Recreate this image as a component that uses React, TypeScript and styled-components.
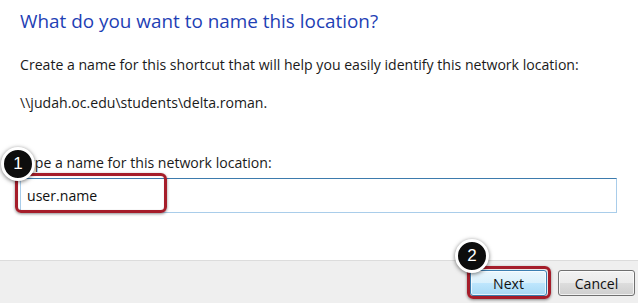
import React from "react";
import styled, { createGlobalStyle } from "styled-components";

const Global = createGlobalStyle`
  html, body { margin: 0; padding: 0; background: #fff; }
  body { font-family: "Open Sans", "Noto Sans", sans-serif; }
`;

const Page = styled.div`
  width: 638px;
  height: 303px;
  display: flex;
  flex-direction: column;
  overflow: hidden;
`;

const Content = styled.div`
  flex: 1;
  display: flex;
  flex-direction: column;
  padding: 7px 21px 0 20px;
  background: #fff;
`;

const Title = styled.h1`
  margin: 0;
  font-size: 18.9px;
  font-weight: 400;
  color: #1f3fb5;
  line-height: 28px;
`;

const Text = styled.p<{ $top: number }>`
  margin: ${(p) => p.$top}px 0 0;
  font-size: 14.1px;
  line-height: 20px;
  color: #1a1a1a;
`;

const Field = styled.div`
  position: relative;
  margin-top: 5px;
`;

const Input = styled.div`
  height: 35px;
  box-sizing: border-box;
  border: 1px solid #a9cdea;
  border-top-color: #3d7bad;
  display: flex;
  align-items: center;
  padding-left: 6px;
  font-size: 14.1px;
  color: #111;
`;

const Highlight = styled.div<{ $x: number; $y: number; $w: number; $h: number }>`
  position: absolute;
  left: ${(p) => p.$x}px;
  top: ${(p) => p.$y}px;
  width: ${(p) => p.$w}px;
  height: ${(p) => p.$h}px;
  box-sizing: border-box;
  border: 3px solid #a51d2a;
  border-radius: 6px;
  box-shadow: 0 1px 3px rgba(0, 0, 0, 0.45), inset 0 0 1px rgba(0, 0, 0, 0.3);
  pointer-events: none;
`;

const Badge = styled.div<{ $x: number; $y: number }>`
  position: absolute;
  left: ${(p) => p.$x}px;
  top: ${(p) => p.$y}px;
  width: 28px;
  height: 28px;
  border-radius: 50%;
  background: #0d0d0d;
  border: 3px solid #fff;
  box-shadow: 0 1px 4px rgba(0, 0, 0, 0.55);
  color: #fff;
  font-family: "Liberation Sans", Arial, sans-serif;
  font-size: 17px;
  display: flex;
  align-items: center;
  justify-content: center;
  z-index: 2;
`;

const Footer = styled.div`
  height: 43px;
  box-sizing: border-box;
  border-top: 1px solid #dcdcdc;
  background: #efefef;
  display: flex;
  justify-content: flex-end;
  align-items: flex-start;
  gap: 11px;
  padding: 9px 3px 0 0;
`;

const ButtonWrap = styled.div`
  position: relative;
`;

const Button = styled.div<{ $primary?: boolean }>`
  width: 77px;
  height: 26px;
  box-sizing: border-box;
  border-radius: 3px;
  border: 1px solid ${(p) => (p.$primary ? "#3c7fb1" : "#707070")};
  background: ${(p) =>
    p.$primary
      ? "linear-gradient(#eaf6fd 0%, #d9f0fc 50%, #bee6fd 51%, #a7d9f5 100%)"
      : "linear-gradient(#f2f2f2 0%, #ebebeb 50%, #dddddd 51%, #cfcfcf 100%)"};
  box-shadow: inset 0 0 0 1px rgba(255, 255, 255, 0.7);
  display: flex;
  align-items: center;
  justify-content: center;
  font-size: 14.1px;
  color: #111;
`;

export default function App() {
  return (
    <Page>
      <Global />
      <Content>
        <Title>What do you want to name this location?</Title>
        <Text $top={20}>
          Create a name for this shortcut that will help you easily identify this network location:
        </Text>
        <Text $top={18}>\\judah.oc.edu\students\delta.roman.</Text>
        <Text $top={40}>Type a name for this network location:</Text>
        <Field>
          <Input>user.name</Input>
          <Highlight $x={-5} $y={-5} $w={152} $h={40} />
          <Badge $x={-19} $y={-31}>1</Badge>
        </Field>
      </Content>
      <Footer>
        <ButtonWrap>
          <Button $primary>Next</Button>
          <Highlight $x={-3} $y={-4} $w={84} $h={33} />
          <Badge $x={-15} $y={-31}>2</Badge>
        </ButtonWrap>
        <Button>Cancel</Button>
      </Footer>
    </Page>
  );
}
